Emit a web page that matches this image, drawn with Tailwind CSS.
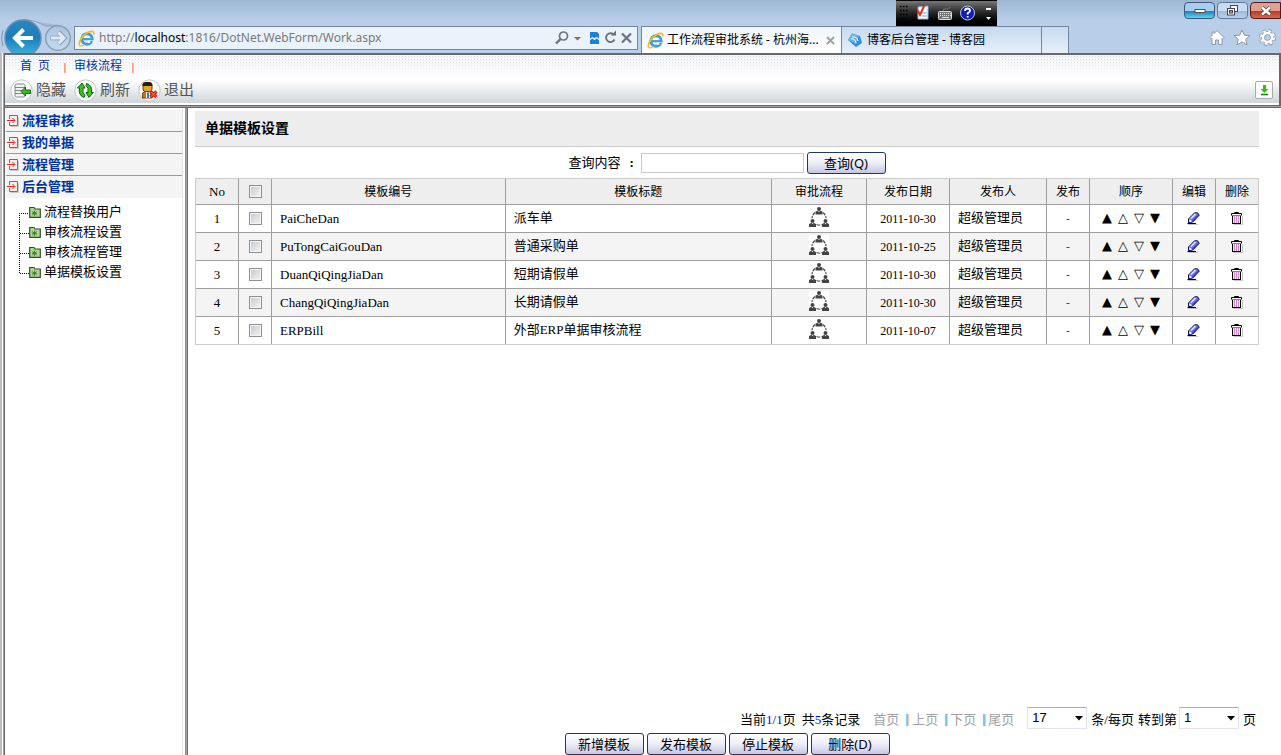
<!DOCTYPE html>
<html lang="zh-CN">
<head>
<meta charset="utf-8">
<title>工作流程审批系统</title>
<script src="https://cdn.jsdelivr.net/npm/@tailwindcss/browser@4"></script>
</head>
<body class="min-h-screen flex flex-col bg-white text-black text-[13px] leading-5 font-['Liberation_Serif','Noto_Sans_CJK_SC',serif]">

<!-- icon definitions -->
<svg width="0" height="0" class="absolute" aria-hidden="true">
  <defs>
    <linearGradient id="gBack" x1="0" y1="0" x2="0" y2="1"><stop offset="0" stop-color="#2a86bd"/><stop offset=".5" stop-color="#1b7fbc"/><stop offset="1" stop-color="#3fb4e2"/></linearGradient>
    <linearGradient id="gFwd" x1="0" y1="0" x2="0" y2="1"><stop offset="0" stop-color="#a9c3df"/><stop offset="1" stop-color="#c6dbf0"/></linearGradient>
    <linearGradient id="gPen" x1="0" y1="0" x2="1" y2="1"><stop offset=".2" stop-color="#d0d4ff"/><stop offset=".7" stop-color="#2a2ae0"/></linearGradient>
    <symbol id="ie" viewBox="0 0 17 17">
      <circle cx="9" cy="9" r="5.2" fill="none" stroke="#3a9fe0" stroke-width="3"/>
      <path d="M5 9.2H14" stroke="#3a9fe0" stroke-width="2.2"/>
      <path d="M10 10.400H16V13H10Z" fill="#eef4fb"/>
      <path d="M12 12.600Q14 12 14.400 11" stroke="#3a9fe0" stroke-width="1.800" fill="none"/>
      <path d="M1.800 15.600C-.2 13 4 5.500 9.500 2.600C13 .8 16.500 .6 15.600 4.500" fill="none" stroke="#f5b91e" stroke-width="1.700"/>
      <path d="M1.800 15.600Q3.500 16.600 6.500 14.500" fill="none" stroke="#f5b91e" stroke-width="1.400"/>
    </symbol>
    <symbol id="flow" viewBox="0 0 20 20">
      <g fill="#444"><circle cx="10" cy="2" r="2"/><path d="M6.500 7.500V4.600L9 3.700L10 5.200L11 3.700L13.500 4.600V7.500Z"/>
      <circle cx="3.500" cy="14" r="2"/><path d="M0 20V17L2.500 15.800L3.500 17.300L4.500 15.800L7 17V20Z"/>
      <circle cx="16.500" cy="14" r="2"/><path d="M13 20V17L15.500 15.800L16.500 17.300L17.500 15.800L20 17V20Z"/></g>
      <path d="M6 5.500Q3.500 7.500 3 11M14 5.500Q16.500 7.500 17 11M7.500 17.500Q10 18.800 12.500 17.500" fill="none" stroke="#555" stroke-width="1.400" stroke-dasharray="3.500 1"/>
    </symbol>
    <symbol id="edit" viewBox="0 0 14 13">
      <path d="M1 12.500H11" stroke="#c4c4c4"/>
      <path d="M.5 11.500H9" stroke="#000"/>
      <path d="M1.500 10.500V7L7.500 .8H10.500L12.200 3.200L6 9.800L3.500 10.500Z" fill="url(#gPen)" stroke="#000066" stroke-width="1"/>
      <path d="M2.200 9.800V7.400L5.500 9.200L3.500 10Z" fill="#fff"/>
      <path d="M4 6.500L8.500 2" stroke="#e4e6ff" stroke-width="1.400"/>
    </symbol>
    <symbol id="trash" viewBox="0 0 12 13">
      <path d="M2.500 12.500H11.500V4" stroke="#c4c4c4" fill="none"/>
      <rect x="1.500" y="3.500" width="8" height="8" fill="#f6dcf6" stroke="#000"/>
      <path d="M3.500 4V11M5.500 4V11M7.500 4V11" stroke="#d090d0"/>
      <path d="M.5 3.500V1.500H10.500V3.500" fill="#fff" stroke="#000"/><path d="M3.500 1.500V.5H7.500V1.500" fill="none" stroke="#000"/>
    </symbol>
    <symbol id="enter" viewBox="0 0 12 12">
      <path d="M3.500 11.500H11.500V2" fill="none" stroke="#c9c9c9"/>
      <path d="M2.500 4V.5H10.500V10.500H2.500V7" fill="#fbeaea" stroke="#d64545"/>
      <path d="M0 5.500H7.500M5.500 3L8 5.500L5.500 8" fill="none" stroke="#d02a2a"/>
    </symbol>
    <symbol id="folder" viewBox="0 0 12 12">
      <path d="M.7 1.500H5L6 3H11.300V11.300H.7Z" fill="#a9dc8a" stroke="#3a4a30" stroke-width="1.200"/>
      <path d="M5.500 4.500V10M3.200 5.500L7.800 9M7.800 5.500L3.200 9M3 7.300H8" stroke="#3f6a3a" stroke-width=".8"/>
    </symbol>
  </defs>
</svg>

<!-- browser chrome -->
<header class="relative h-[53px] shrink-0 flex flex-col bg-linear-to-b from-[#9db7d3] to-[#b9cfe9] to-40% font-['Noto_Sans','Noto_Sans_CJK_SC',sans-serif]">
  <svg class="absolute left-0 top-[18px]" width="74" height="35" viewBox="0 0 74 35" aria-hidden="true">
    <path d="M23 1.500Q36 2 45 8Q52 9 58 7" fill="#a4bad3" stroke="#8fa5bf"/>
    <path d="M3 12Q0 20 3 28" fill="none" stroke="#8399b3"/>
    <circle cx="23" cy="20" r="18" fill="url(#gBack)" stroke="#6c8fb0" stroke-width="1.500"/>
    <path d="M33 20H16M23.500 11.500L15 20L23.500 28.500" fill="none" stroke="#fff" stroke-width="4"/>
    <circle cx="58" cy="20" r="12.300" fill="url(#gFwd)" stroke="#8a9db3" stroke-width="1.400"/>
    <path d="M50.500 20H63M58.500 14L64.500 20L58.500 26" fill="none" stroke="#8a9db3" stroke-width="4.500"/>
    <path d="M51 20H63M58.500 14.500L64 20L58.500 25.500" fill="none" stroke="#dfeaf6" stroke-width="3"/>
  </svg>
  <div class="absolute right-[284px] top-0 w-[101px] h-[26px] bg-linear-to-b from-[#777] via-[#222] to-black border-t border-black">
    <svg width="101" height="25" viewBox="0 0 101 25" aria-hidden="true">
      <path d="M4 5.500H12M4 9.500H12M4 13.500H12M4 17.500H12M4 21.500H12" stroke="#000" stroke-width="1.500" stroke-dasharray="1.500 1.500"/>
      <path d="M22 6L32 5V18H22Z" fill="#fff" stroke="#8ab4e8"/><path d="M21.500 9L24 14L28.500 4" fill="none" stroke="#e03010" stroke-width="2"/><path d="M26 12H31M26 15H31" stroke="#6aa0e0"/>
      <rect x="42.500" y="10.500" width="13" height="8" rx="1" fill="#777" stroke="#ddd"/><path d="M44 12.500H55M44 14.500H55" stroke="#ddd" stroke-dasharray="1 1"/><path d="M46 16.500H53" stroke="#ddd"/><path d="M47 10Q47 7 50 8T54 6" fill="none" stroke="#777"/>
      <circle cx="71.500" cy="12" r="7" fill="#1020b0" stroke="#b8c4f0"/><path d="M69 10Q69 7.500 71.500 7.500Q74 7.500 74 9.800Q74 11 71.700 12.200V13.500M71.700 15V16.500" fill="none" stroke="#fff" stroke-width="1.800"/>
      <path d="M90 8H95" stroke="#fff" stroke-width="2"/><path d="M90 16H95L92.500 19Z" fill="#fff"/>
    </svg>
  </div>
  <div class="h-[26px] shrink-0 flex justify-end items-start gap-0.5 pt-0.5">
    <button aria-label="最小化" class="w-[31px] h-[17px] flex items-center justify-center rounded-sm border border-[#3a5a80] bg-linear-to-b from-[#a9cdec] from-50% via-[#1b80b8] via-55% to-[#5fd6f4]">
      <svg width="12" height="6"><rect x="1" y="1.500" width="10" height="3" fill="#fff" stroke="#555"/></svg></button>
    <button aria-label="还原" class="w-[31px] h-[17px] flex items-center justify-center rounded-sm border border-[#5f7a9a] bg-linear-to-b from-[#c9dbee] from-50% via-[#9fb9d6] via-55% to-[#b9d2ea]">
      <svg width="13" height="11" fill="#fff" stroke="#445"><rect x="4.500" y=".5" width="7" height="6"/><rect x="1.500" y="3.500" width="7" height="6.500"/><rect x="3.500" y="5.500" width="3" height="2.500" fill="#9ab"/></svg></button>
    <button aria-label="关闭" class="w-[31px] h-[17px] flex items-center justify-center rounded-l-sm border border-[#5a1a1a] bg-linear-to-b from-[#e0a090] from-50% via-[#b83a28] via-55% to-[#d06a50]">
      <svg width="12" height="10"><path d="M2 1.500L10 8.500M10 1.500L2 8.500" stroke="#544" stroke-width="4"/><path d="M2 1.500L10 8.500M10 1.500L2 8.500" stroke="#fff" stroke-width="2.400"/></svg></button>
  </div>
  <div class="flex-1 flex items-start text-xs">
    <div class="ml-[74px] flex-1 min-w-0 h-6 flex items-center border border-[#76859b] bg-[#eaf2fb] pl-[3px] pr-1">
      <svg width="17" height="17"><use href="#ie"/></svg>
      <div role="textbox" contenteditable="true" aria-label="地址" class="ml-1 flex-1 text-[#7a7a7a] text-xs leading-5 whitespace-nowrap outline-none">http://<span class="text-black">localhost</span>:1816/DotNet.WebForm/Work.aspx</div>
      <svg width="78" height="18" viewBox="0 0 78 18" fill="none" stroke="#6d7379" aria-hidden="true">
        <circle cx="8.500" cy="7" r="4" stroke-width="1.700"/><path d="M5.500 10L1 14.500" stroke-width="2.400"/>
        <path d="M19 8H26L22.500 11.500Z" fill="#6d7379" stroke="none"/>
        <path d="M35 3H42L44 5V15H35Z" fill="#1e7fd8" stroke="none"/><path d="M35 10.500L37.500 8.500L39.500 10.500L41.500 8.500L44 10.500" stroke="#fff" stroke-width="1.200"/>
        <path d="M59 6A4.400 4.400 0 1 0 59.500 10.500" stroke-width="1.900"/><path d="M56 6.500H61V1.500Z" fill="#6d7379" stroke="none"/>
        <path d="M67 4.500L76 13.500M76 4.500L67 13.500" stroke-width="2.200"/>
      </svg>
    </div>
    <div class="ml-[3px] w-[201px] h-full flex items-center gap-[3px] border border-b-0 border-[#76859b] bg-linear-to-b from-[#f0f5fc] to-white pl-[5px] pr-1.5">
      <svg width="17" height="17" class="shrink-0"><use href="#ie"/></svg>
      <span class="flex-1 whitespace-nowrap">工作流程审批系统 - 杭州海...</span>
      <button aria-label="关闭选项卡"><svg width="9" height="9"><path d="M1 1L8 8M8 1L1 8" stroke="#a0a0a0" stroke-width="1.900"/></svg></button>
    </div>
    <div class="w-[200px] h-full flex items-center gap-1 border border-l-0 border-b-0 border-[#76859b] bg-linear-to-b from-[#c6daf0] to-[#e6effa] pl-[5px]">
      <svg width="16" height="16" viewBox="0 0 16 16" aria-hidden="true"><path d="M1 8L5 1.500L13 4L15 11L9 15Z" fill="#2f8fdc"/><path d="M1 8L5 1.500L12 3.500L9 12Z" fill="#63b4ef"/><path d="M4 7Q8 6 9 11M5 5Q10 4 11 9" fill="none" stroke="#fff"/></svg>
      <span class="whitespace-nowrap">博客后台管理 - 博客园</span>
    </div>
    <div class="w-[27px] h-full border border-l-0 border-b-0 border-[#76859b] bg-linear-to-b from-[#c6daf0] to-[#e6effa]"></div>
    <div class="w-[212px] flex justify-end gap-2 pt-[3px] pr-[5px]">
      <button aria-label="主页"><svg width="16" height="17" viewBox="0 0 16 17"><path d="M8 1.500L15 8.500L13.500 10L13 9.500V15.500H9.500V11H6.500V15.500H3V9.500L2.500 10L1 8.500L3 6.500V3H5V4.500Z" fill="#fff" stroke="#8d96a2"/></svg></button>
      <button aria-label="收藏夹"><svg width="18" height="17" viewBox="0 0 18 17"><path d="M9 1L11.300 6.200L17 6.600L12.700 10.300L14 15.800L9 12.900L4 15.800L5.300 10.300L1 6.600L6.700 6.200Z" fill="#fff" stroke="#8d96a2"/></svg></button>
      <button aria-label="工具"><svg width="17" height="17" viewBox="0 0 17 17"><circle cx="8.500" cy="8.500" r="6.500" fill="none" stroke="#8d96a2" stroke-width="4" stroke-dasharray="2.900 2.200"/><circle cx="8.500" cy="8.500" r="4.500" fill="none" stroke="#8d96a2" stroke-width="4"/><circle cx="8.500" cy="8.500" r="6.300" fill="none" stroke="#fff" stroke-width="2.500" stroke-dasharray="2.500 2.450"/><circle cx="8.500" cy="8.500" r="4.500" fill="none" stroke="#fff" stroke-width="2.400"/></svg></button>
    </div>
  </div>
</header>

<div class="flex-1 flex border-l-2 border-[#bdbdbd]">
<div class="ml-px flex-1 min-w-0 flex flex-col border-l border-[#a0a0a0]">
<div class="flex-1 flex flex-col border-l border-[#696969]">

  <!-- top frame -->
  <div class="relative h-[52px] shrink-0 flex flex-col border-t-2 border-r-2 border-[#696969] bg-linear-to-b from-[#f4f5f8] via-white via-50% to-[#cdd2d7]">
    <div class="absolute inset-x-0 top-0 h-[18px] bg-[radial-gradient(#d3d7df_1px,transparent_1px)] bg-[size:3px_3px] mask-b-from-20% mask-b-to-100%"></div>
    <nav class="relative h-[22px] flex items-center pl-[15px] text-xs text-[#003399]">
      <a href="#" class="whitespace-pre">首  页</a>
      <span class="ml-3.5 mr-2 mt-1 w-0.5 h-2.5 bg-[#f5a080] border-r border-[#9fd8ee]"></span>
      <a href="#">审核流程</a>
      <span class="ml-2.5 mt-1 w-0.5 h-2.5 bg-[#f5a080] border-r border-[#9fd8ee]"></span>
    </nav>
    <div class="relative flex-1 flex items-center justify-between pl-[5px] pr-1.5 border-b-2 border-white">
      <div class="flex gap-2 text-[15px] text-[#555]">
        <button class="flex items-center gap-[3px]">
          <svg width="23" height="23" viewBox="0 0 23 23" aria-hidden="true"><circle cx="11.500" cy="11.500" r="10.700" fill="#fafafa" stroke="#c4c4c4"/><rect x="5" y="5" width="10" height="13" rx="1.500" fill="#f2f2f2" stroke="#7f8890"/><path d="M5 8.500H15M5 11.500H15M5 14.500H15" stroke="#7f8890"/><path d="M11 12.500L15.500 8V11H20.500V14.500H15.500V17Z" fill="#3fb81e" stroke="#157010"/></svg>隐藏</button>
        <button class="flex items-center gap-[3px]">
          <svg width="23" height="23" viewBox="0 0 23 23" aria-hidden="true"><circle cx="11.500" cy="11.500" r="10.700" fill="#fafafa" stroke="#c4c4c4"/><path d="M10 18.500Q4 16 5.500 9H3.500L8 4L11 9H9Q8 14 11 16.500Z" fill="#3fc01e" stroke="#0c6010"/><path d="M12.500 4.500Q18.500 6 17.500 13.500H19.500L15 18.500L12 13.500H14Q15 8.500 12 6.500Z" fill="#3fc01e" stroke="#0c6010"/></svg>刷新</button>
        <button class="flex items-center gap-[3px]">
          <svg width="23" height="23" viewBox="0 0 23 23" aria-hidden="true"><circle cx="11.500" cy="11.500" r="10.700" fill="#fafafa" stroke="#c4c4c4"/><path d="M4.500 19V14L8 12H12L14 14V19Z" fill="#b97a18" stroke="#7a4a08"/><path d="M8 13H12V19H8Z" fill="#e8f2ff"/><path d="M10 13.500V19" stroke="#2b78d8" stroke-width="2"/><rect x="5" y="4" width="9" height="8.500" rx="2.500" fill="#e0a52c" stroke="#6a4208"/><path d="M4.500 7V5Q5 3 8 3H11Q14.500 3 14.500 7Z" fill="#2a1c08"/><path d="M12.500 12.500L18.500 18M18.500 12.500L12.500 18" stroke="#d82010" stroke-width="3.400"/><path d="M13 13L18 17.500M18 13L13 17.500" stroke="#ff7a60" stroke-width="1"/></svg>退出</button>
      </div>
      <button aria-label="展开" class="w-[18px] h-[18px] flex items-center justify-center bg-white border border-[#a9a9a9] rounded-xs"><svg width="9" height="12" viewBox="0 0 9 12"><path d="M3 1H6V5H8.500L4.500 9L.5 5H3Z" fill="#3fb81e"/><path d="M1 10.500H8" stroke="#208010" stroke-width="1.600"/></svg></button>
    </div>
  </div>
  <div class="h-[3px] shrink-0 border-t border-b border-t-[#696969] border-b-[#696969] bg-[#a0a0a0]"></div>

  <div class="flex-1 flex">
    <!-- side menu -->
    <aside class="w-[181px] shrink-0 border-r border-[#6f9bc8] pr-0.5">
      <div class="h-full border-r border-[#e3e5ea] pt-0.5 pl-px">
        <ul class="bg-[#f4f4f4] font-bold text-[#003399]">
          <li class="h-[22px] flex items-center gap-[3px] pl-px border-b border-[#999]"><svg width="12" height="12"><use href="#enter"/></svg><a href="#">流程审核</a></li>
          <li class="h-[22px] flex items-center gap-[3px] pl-px border-b border-[#999]"><svg width="12" height="12"><use href="#enter"/></svg><a href="#">我的单据</a></li>
          <li class="h-[22px] flex items-center gap-[3px] pl-px border-b border-[#999]"><svg width="12" height="12"><use href="#enter"/></svg><a href="#">流程管理</a></li>
          <li class="h-[22px] flex items-center gap-[3px] pl-px"><svg width="12" height="12"><use href="#enter"/></svg><a href="#">后台管理</a></li>
        </ul>
        <ul class="pl-[13px] pt-1">
          <li class="h-5 flex items-center"><svg width="10" height="20"><path d="M.5 20V11.500H10" fill="none" stroke="#000" stroke-dasharray="1 1"/></svg><svg width="12" height="12" class="mr-[3px]"><use href="#folder"/></svg><a href="#">流程替换用户</a></li>
          <li class="h-5 flex items-center"><svg width="10" height="20"><path d="M.5 0V20M1 11.500H10" fill="none" stroke="#000" stroke-dasharray="1 1"/></svg><svg width="12" height="12" class="mr-[3px]"><use href="#folder"/></svg><a href="#">审核流程设置</a></li>
          <li class="h-5 flex items-center"><svg width="10" height="20"><path d="M.5 0V20M1 11.500H10" fill="none" stroke="#000" stroke-dasharray="1 1"/></svg><svg width="12" height="12" class="mr-[3px]"><use href="#folder"/></svg><a href="#">审核流程管理</a></li>
          <li class="h-5 flex items-center"><svg width="10" height="20"><path d="M.5 0V11.500H10" fill="none" stroke="#000" stroke-dasharray="1 1"/></svg><svg width="12" height="12" class="mr-[3px]"><use href="#folder"/></svg><a href="#">单据模板设置</a></li>
        </ul>
      </div>
    </aside>

    <!-- content -->
    <div class="flex-1 min-w-0 flex border-l border-[#a0a0a0]">
    <main class="flex-1 min-w-0 flex flex-col border-l border-[#696969] pl-[7px] pr-[22px] pt-[3px]">
      <h1 class="h-9 flex items-center pl-2.5 bg-[#ededed] border-b border-[#ccc] text-sm font-bold">单据模板设置</h1>
      <form class="h-[31px] flex items-center justify-center" onsubmit="return false">
        <label for="q" class="flex"><span class="w-[61px]">查询内容</span><b class="w-[11px]">:</b></label>
        <input id="q" type="text" class="w-[163px] h-5 border border-[#c8c8c8] px-1 outline-none">
        <button class="ml-[3px] w-[79px] h-[22px] rounded-[3px] border border-[#1f3a5f] bg-linear-to-b from-white via-[#eeeef8] to-[#c6c6e2] leading-5 font-['Noto_Sans','Noto_Sans_CJK_SC',sans-serif]">查询(Q)</button>
      </form>
      <table class="w-full table-fixed border-separate border-spacing-0 border border-[#ccc] text-center text-xs leading-4">
        <colgroup><col class="w-[43px]"><col class="w-[33px]"><col class="w-[22%]"><col><col class="w-[95px]"><col class="w-[83px]"><col class="w-[97px]"><col class="w-[43px]"><col class="w-[83px]"><col class="w-[43px]"><col class="w-[42px]"></colgroup>
        <thead>
          <tr class="h-[26px] bg-[#eee] *:font-normal *:border-b *:border-r *:border-[#9f9f9f] *:last:border-r-0 *:p-0">
            <th class="text-[13px]">No</th>
            <th><input type="checkbox" aria-label="全选" class="block mx-auto appearance-none size-[13px] border border-[#8e8f8f] bg-linear-to-br from-[#c3c8d0] to-[#f6f6f6] shadow-[inset_0_0_0_1px_#f4f4f4]"></th>
            <th>模板编号</th><th>模板标题</th><th>审批流程</th><th>发布日期</th><th>发布人</th><th>发布</th><th>顺序</th><th>编辑</th><th>删除</th>
          </tr>
        </thead>
        <tbody id="rows"></tbody>
      </table>

      <div class="mt-auto flex items-center justify-end h-[26px] pr-[3px] whitespace-nowrap">
        <span>当前<span class="text-[#0000ff]">1</span>/<span class="text-[#0000ff]">1</span>页</span>
        <span class="ml-1.5">共<span class="text-[#0000ff]">5</span>条记录</span>
        <a href="#" class="ml-[13px] text-[#a0a0a0]">首页</a>
        <span class="ml-[7px] mr-[3px] w-[3px] h-3 bg-[#7cc8f0] border-r border-[#f0c8b0]"></span><a href="#" class="text-[#a0a0a0]">上页</a>
        <span class="ml-[7px] mr-0.5 w-[3px] h-3 bg-[#7cc8f0] border-r border-[#f0c8b0]"></span><a href="#" class="text-[#a0a0a0]">下页</a>
        <span class="ml-[7px] mr-0.5 w-[3px] h-3 bg-[#7cc8f0] border-r border-[#f0c8b0]"></span><a href="#" class="text-[#a0a0a0]">尾页</a>
        <span class="relative ml-[13px] mr-1 mb-1">
          <select aria-label="每页条数" class="block appearance-none w-[60px] h-[22px] pl-1 border border-[#e2e3ea] border-t-[#abadb3] bg-white font-['Liberation_Sans',sans-serif] text-[13px] leading-5"><option>17</option></select>
          <svg class="absolute right-1 top-[9px] pointer-events-none" width="8" height="5"><path d="M0 0H8L4 4.500Z"/></svg>
        </span>
        <span>条/每页</span>
        <span class="ml-1">转到第</span>
        <span class="relative ml-0.5 mr-1 mb-1">
          <select aria-label="页码" class="block appearance-none w-[60px] h-[22px] pl-1 border border-[#e2e3ea] border-t-[#abadb3] bg-white font-['Liberation_Sans',sans-serif] text-[13px] leading-5"><option>1</option></select>
          <svg class="absolute right-1 top-[9px] pointer-events-none" width="8" height="5"><path d="M0 0H8L4 4.500Z"/></svg>
        </span>
        <span>页</span>
      </div>
      <div class="flex justify-center gap-[3px] *:w-[79px] *:h-[22px] *:rounded-[3px] *:border *:border-[#1f3a5f] *:bg-linear-to-b *:from-white *:via-[#eeeef8] *:to-[#c6c6e2] *:leading-5 font-['Noto_Sans','Noto_Sans_CJK_SC',sans-serif]">
        <button>新增模板</button><button>发布模板</button><button>停止模板</button><button>删除(D)</button>
      </div>
    </main>
    </div>
  </div>
</div>
</div>
</div>

<script>
const data = [
  ['PaiCheDan', '派车单', '2011-10-30'],
  ['PuTongCaiGouDan', '普通采购单', '2011-10-25'],
  ['DuanQiQingJiaDan', '短期请假单', '2011-10-30'],
  ['ChangQiQingJiaDan', '长期请假单', '2011-10-30'],
  ['ERPBill', '外部ERP单据审核流程', '2011-10-07']
];
document.getElementById('rows').innerHTML = data.map(([code, title, date], i) => `
  <tr class="h-7 last:h-[27px] even:bg-[#f4f4f4] *:p-0 *:border-b *:border-r *:border-[#9f9f9f] *:last:border-r-0 last:*:border-b-0">
    <td class="text-[13px]">${i + 1}</td>
    <td><input type="checkbox" aria-label="选择 ${code}" class="block mx-auto appearance-none size-[13px] border border-[#8e8f8f] bg-linear-to-br from-[#c3c8d0] to-[#f6f6f6] shadow-[inset_0_0_0_1px_#f4f4f4]"></td>
    <td class="text-left text-[13px]"><div class="pl-2">${code}</div></td>
    <td class="text-left text-[13px]"><div class="pl-2 pb-0.5">${title}</div></td>
    <td><button aria-label="审批流程" class="block mx-auto mb-[3px] bg-white"><svg width="20" height="20"><use href="#flow"/></svg></button></td>
    <td>${date}</td>
    <td class="text-left text-[13px]"><div class="pl-2 pb-0.5">超级管理员</div></td>
    <td><span class="text-[#ff0000]">-</span></td>
    <td><div class="flex justify-center gap-1.5 pb-0.5 text-[13px] font-['DejaVu_Sans',sans-serif]"><button>▲</button><button>△</button><button>▽</button><button>▼</button></div></td>
    <td><button aria-label="编辑" class="block mx-auto"><svg width="14" height="13"><use href="#edit"/></svg></button></td>
    <td><button aria-label="删除" class="block mx-auto"><svg width="12" height="13"><use href="#trash"/></svg></button></td>
  </tr>`).join('');
</script>
</body>
</html>
